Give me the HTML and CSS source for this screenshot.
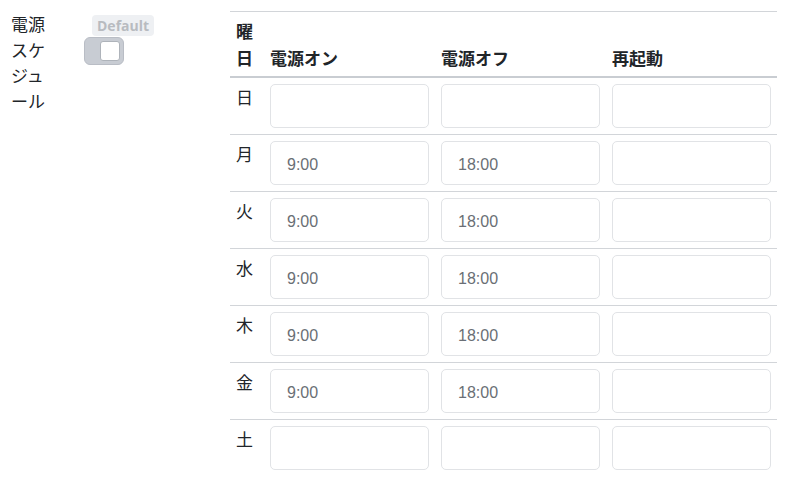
FILE: index.html
```html
<!DOCTYPE html>
<html lang="ja">
<head>
<meta charset="utf-8">
<link rel="stylesheet" href="styles.css">
</head>
<body>
<div class="page">
  <div class="label">電源スケジュール</div>
  <div class="ctrl">
    <span class="badge">Default</span>
    <span class="toggle"><span class="knob"></span></span>
  </div>
  <table class="sched">
    <thead>
      <tr>
        <th class="c-day">曜日</th>
        <th class="c-in">電源オン</th>
        <th class="c-in">電源オフ</th>
        <th class="c-in">再起動</th>
      </tr>
    </thead>
    <tbody>
      <tr><td class="day">日</td><td><input class="inp" value=""></td><td><input class="inp" value=""></td><td><input class="inp" value=""></td></tr>
      <tr><td class="day">月</td><td><input class="inp" value="9:00"></td><td><input class="inp" value="18:00"></td><td><input class="inp" value=""></td></tr>
      <tr><td class="day">火</td><td><input class="inp" value="9:00"></td><td><input class="inp" value="18:00"></td><td><input class="inp" value=""></td></tr>
      <tr><td class="day">水</td><td><input class="inp" value="9:00"></td><td><input class="inp" value="18:00"></td><td><input class="inp" value=""></td></tr>
      <tr><td class="day">木</td><td><input class="inp" value="9:00"></td><td><input class="inp" value="18:00"></td><td><input class="inp" value=""></td></tr>
      <tr><td class="day">金</td><td><input class="inp" value="9:00"></td><td><input class="inp" value="18:00"></td><td><input class="inp" value=""></td></tr>
      <tr class="last"><td class="day">土</td><td><input class="inp" value=""></td><td><input class="inp" value=""></td><td><input class="inp" value=""></td></tr>
    </tbody>
  </table>
</div>
</body>
</html>
```

FILE: styles.css
```css
html, body {
  margin: 0;
  padding: 0;
  background: #ffffff;
}
body {
  font-family: "Noto Sans CJK JP", "Liberation Sans", sans-serif;
  font-size: 17px;
  line-height: 1.5;
  color: #212529;
}
.page {
  display: flex;
  align-items: flex-start;
  padding: 11px 0 0 11px;
}
.label {
  width: 40px;
  flex: none;
  line-height: 25.5px;
}
.ctrl {
  flex: none;
  width: 146px;
  margin-left: 33px;
  display: flex;
  flex-direction: column;
  align-items: flex-start;
}
.badge {
  margin-left: 8px;
  margin-top: 4px;
  height: 21px;
  padding: 0 5px;
  background: #eef0f3;
  border-radius: 4px;
  font-family: "Open Sans", "Liberation Sans", sans-serif;
  font-weight: 700;
  font-size: 14px;
  line-height: 21px;
  color: #b8bbc0;
}
.toggle {
  margin-top: 1px;
  width: 40px;
  height: 28px;
  box-sizing: border-box;
  background: #c8ccd3;
  border: 1px solid #b9bdc5;
  border-radius: 6px;
  display: flex;
  align-items: center;
  justify-content: flex-end;
  padding-right: 3px;
}
.knob {
  width: 20px;
  height: 20px;
  box-sizing: border-box;
  background: #ffffff;
  border: 1px solid #aeb3ba;
  border-radius: 3px;
}
.sched {
  border-collapse: collapse;
  border-top: 1px solid #d2d5d9;
  width: 547px;
  flex: none;
}
.sched th {
  text-align: left;
  vertical-align: bottom;
  font-weight: 700;
  padding: 5px 6px 5px 6px;
  line-height: 27px;
  border-bottom: 2px solid #c9cdd2;
}
.c-day { width: 22px; }
.c-in { width: 159px; }
.sched td {
  padding: 6px;
  vertical-align: top;
  border-bottom: 1px solid #d2d5d9;
}
.sched tr.last td { border-bottom: none; }
.day {
  line-height: 25.5px;
}
.inp {
  display: block;
  width: 159px;
  height: 44px;
  box-sizing: border-box;
  border: 1px solid #e1e3e6;
  border-radius: 5px;
  padding: 4px 16px 0 16px;
  font-family: "Liberation Sans", Arial, sans-serif;
  font-size: 16px;
  color: #6a6f75;
  background: #ffffff;
  outline: none;
}
```
